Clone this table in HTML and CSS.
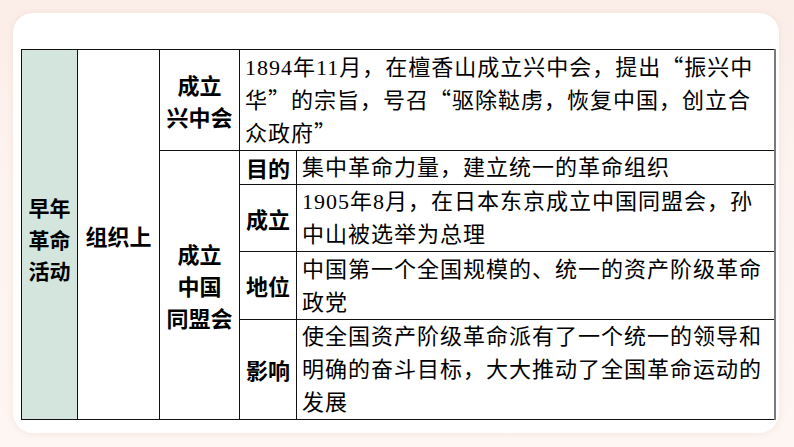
FILE: index.html
```html
<!DOCTYPE html>
<html lang="zh">
<head>
<meta charset="utf-8">
<link rel="stylesheet" href="styles.css">
</head>
<body>
<div class="card">
  <table class="grid">
    <colgroup>
      <col class="c1"><col class="c2"><col class="c3"><col class="c4"><col class="c5">
    </colgroup>
    <tr class="r1">
      <td rowspan="5" class="green label">早年<br>革命<br>活动</td>
      <td rowspan="5" class="label">组织上</td>
      <td class="label">成立<br>兴中会</td>
      <td colspan="2" class="text">1894年11月，在檀香山成立兴中会，提出<span class="q">“</span>振兴中<br>华<span class="q">”</span>的宗旨，号召<span class="q">“</span>驱除鞑虏，恢复中国，创立合<br>众政府<span class="q">”</span></td>
    </tr>
    <tr class="r2">
      <td rowspan="4" class="label">成立<br>中国<br>同盟会</td>
      <td class="label sub">目的</td>
      <td class="text">集中革命力量，建立统一的革命组织</td>
    </tr>
    <tr class="r3">
      <td class="label sub">成立</td>
      <td class="text">1905年8月，在日本东京成立中国同盟会，孙<br>中山被选举为总理</td>
    </tr>
    <tr class="r4">
      <td class="label sub">地位</td>
      <td class="text">中国第一个全国规模的、统一的资产阶级革命<br>政党</td>
    </tr>
    <tr class="r5">
      <td class="label sub">影响</td>
      <td class="text">使全国资产阶级革命派有了一个统一的领导和<br>明确的奋斗目标，大大推动了全国革命运动的<br>发展</td>
    </tr>
  </table>
</div>
</body>
</html>
```
FILE: styles.css
```css
html, body {
  margin: 0;
  padding: 0;
}
body {
  width: 794px;
  height: 447px;
  box-sizing: border-box;
  padding: 13px 15px 14px 13px;
  background: linear-gradient(180deg, #fbede8 0%, #fdf4f0 40%, #fdf6f2 100%);
  overflow: hidden;
}
.card {
  box-sizing: border-box;
  width: 766px;
  height: 420px;
  background: #ffffff;
  border-radius: 20px;
  box-shadow: 0 0 6px rgba(240, 210, 200, 0.5);
  padding: 36px 0 0 8px;
}
.grid {
  border-collapse: collapse;
  table-layout: fixed;
  width: 753px;
  color: #000;
}
.c1 { width: 56px; }
.c2 { width: 82px; }
.c3 { width: 80px; }
.c4 { width: 57px; }
.c5 { width: 478px; }
.grid td {
  border: 1px solid #111;
  padding: 0;
  vertical-align: middle;
}
.grid td:last-child {
  border-right: 2px solid #7a7a7a;
}
.grid td.green, .grid td.label {
  border-right: 1px solid #111;
}
.r1 { height: 101px; }
.r2 { height: 33px; }
.r3 { height: 66px; }
.r4 { height: 68px; }
.r5 { height: 99px; }
.label {
  font-family: "Noto Sans CJK SC", "Noto Sans", sans-serif;
  font-weight: 700;
  font-size: 22px;
  line-height: 32px;
  text-align: center;
  white-space: nowrap;
}
.green {
  background: #d3e5dc;
  font-size: 21px;
  line-height: 31.5px;
  padding-top: 10px !important;
}
.sub {
  line-height: 33px;
}
.text {
  font-family: "Liberation Serif", "Noto Sans CJK SC", serif;
  font-size: 22px;
  letter-spacing: 1px;
  line-height: 33px;
  white-space: nowrap;
  padding-left: 5px !important;
  text-align: left;
}
.q {
  font-family: "Noto Sans CJK SC", sans-serif;
  font-feature-settings: "fwid" 1;
  line-height: 0;
}
```
